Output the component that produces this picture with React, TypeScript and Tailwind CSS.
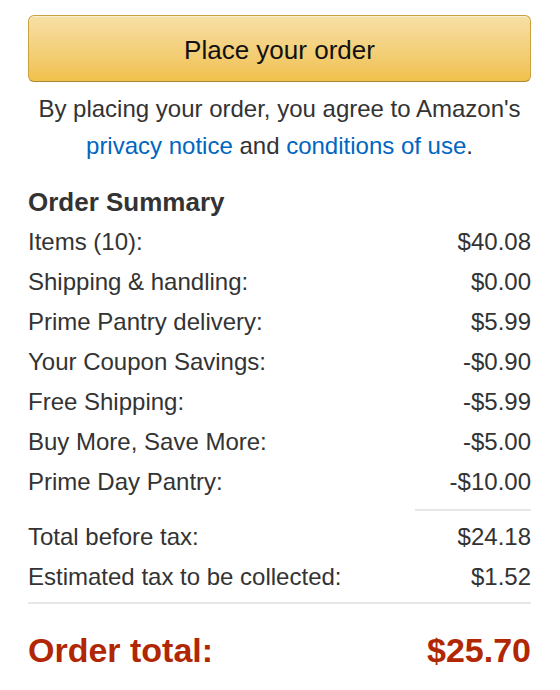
const rows: [string, string][] = [
  ["Items (10):", "$40.08"],
  ["Shipping & handling:", "$0.00"],
  ["Prime Pantry delivery:", "$5.99"],
  ["Your Coupon Savings:", "-$0.90"],
  ["Free Shipping:", "-$5.99"],
  ["Buy More, Save More:", "-$5.00"],
  ["Prime Day Pantry:", "-$10.00"],
];

function Row({ label, value }: { label: string; value: string }) {
  return (
    <div className="flex items-center justify-between h-10">
      <span>{label}</span>
      <span>{value}</span>
    </div>
  );
}

export default function App() {
  return (
    <div
      className="w-[560px] h-[690px] bg-white pl-[28px] pr-[29px] pt-[15px] text-[#333] text-[24px]"
      style={{ fontFamily: '"Liberation Sans", Arial, sans-serif' }}
    >
      <button className="w-full h-[67px] pt-[3px] rounded-[6px] border-[1.5px] border-[#c9a23f] border-b-[#a88734] bg-gradient-to-b from-[#f7dfa5] to-[#f0c14b] text-[#111] text-[26px] shadow-[inset_0_1px_0_rgba(255,255,255,0.5)]">
        Place your order
      </button>

      <p className="mt-[8px] text-center leading-[37px]">
        By placing your order, you agree to Amazon's
        <br />
        <a className="text-[#0066c0]">privacy notice</a> and{" "}
        <a className="text-[#0066c0]">conditions of use</a>.
      </p>

      <h2 className="mt-[18px] font-bold text-[26px] leading-[40px]">Order Summary</h2>

      <div>
        {rows.map(([l, v]) => (
          <Row key={l} label={l} value={v} />
        ))}
      </div>

      <div className="flex justify-end mt-[7px]">
        <div className="w-[116px] border-t-2 border-[#e7e7e7]" />
      </div>

      <div className="mt-[6px]">
        <Row label="Total before tax:" value="$24.18" />
        <Row label="Estimated tax to be collected:" value="$1.52" />
      </div>

      <div className="mt-[5px] border-t-2 border-[#e7e7e7]" />

      <div className="mt-[26px] flex items-center justify-between text-[#b12704] font-bold text-[34px] leading-[40px]">
        <span>Order total:</span>
        <span>$25.70</span>
      </div>
    </div>
  );
}
